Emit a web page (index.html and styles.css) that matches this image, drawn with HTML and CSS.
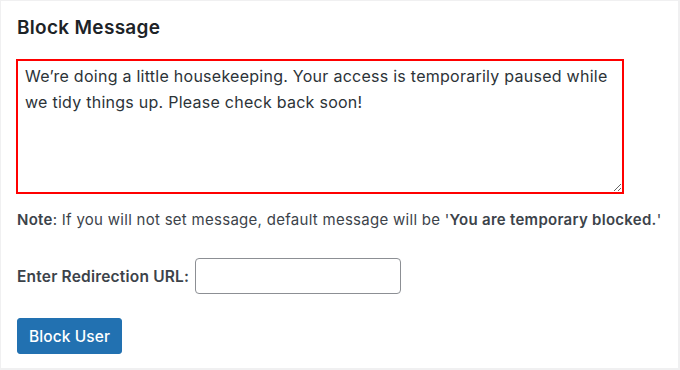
FILE: index.html
```html
<!DOCTYPE html>
<html>
<head>
<meta charset="utf-8">
<link rel="stylesheet" href="styles.css">
</head>
<body>
<div class="panel">
  <h2 class="title">Block Message</h2>
  <textarea class="message">We’re doing a little housekeeping. Your access is temporarily paused while we tidy things up. Please check back soon!</textarea>
  <p class="note"><b>Note</b>: If you will not set message, default message will be '<b>You are temporary blocked.</b>'</p>
  <div class="field">
    <label class="label" for="url">Enter Redirection URL:</label>
    <input class="input" id="url" type="text">
  </div>
  <button class="btn">Block User</button>
</div>
</body>
</html>
```
FILE: styles.css
```css
html, body {
  margin: 0;
  padding: 0;
}
body {
  background: #f0f0f1;
  width: 680px;
  height: 370px;
  padding: 1px 2px 2px 1px;
  box-sizing: border-box;
  font-family: Inter, "Noto Sans", sans-serif;
  color: #3c434a;
}
.panel {
  background: #fff;
  height: 100%;
  box-sizing: border-box;
  padding: 14px 0 0 15px;
}
.title {
  margin: 0 0 0 1px;
  font-size: 19px;
  letter-spacing: 0.3px;
  font-weight: 600;
  color: #1d2327;
  line-height: 26px;
}
.message {
  display: block;
  margin-top: 18px;
  width: 608px;
  height: 135px;
  box-sizing: border-box;
  border: 2px solid #ff0000;
  padding: 2px 7px;
  font-family: Inter, "Noto Sans", sans-serif;
  font-size: 16px;
  letter-spacing: 0.26px;
  line-height: 26px;
  color: #2c3338;
  outline: none;
  resize: both;
}
.note {
  margin: 16px 0 0 1px;
  font-size: 15px;
  letter-spacing: 0.28px;
  line-height: 20px;
}
.note b {
  font-weight: 600;
}
.field {
  display: flex;
  align-items: center;
  gap: 6px;
  margin: 28px 0 0 1px;
}
.label {
  font-size: 15.5px;
  letter-spacing: 0.2px;
  font-weight: 600;
}
.input {
  width: 206px;
  height: 36px;
  box-sizing: border-box;
  border: 1px solid #8c8f94;
  border-radius: 4px;
  padding: 0 8px;
  font-size: 14px;
}
.btn {
  display: block;
  margin: 24px 0 0 1px;
  width: 105px;
  height: 36px;
  background: #2271b1;
  color: #fff;
  border: 1px solid #2271b1;
  border-radius: 3px;
  font-family: Inter, "Noto Sans", sans-serif;
  font-size: 15.5px;
  letter-spacing: 0.1px;
  font-weight: 500;
  padding: 0;
}
```
